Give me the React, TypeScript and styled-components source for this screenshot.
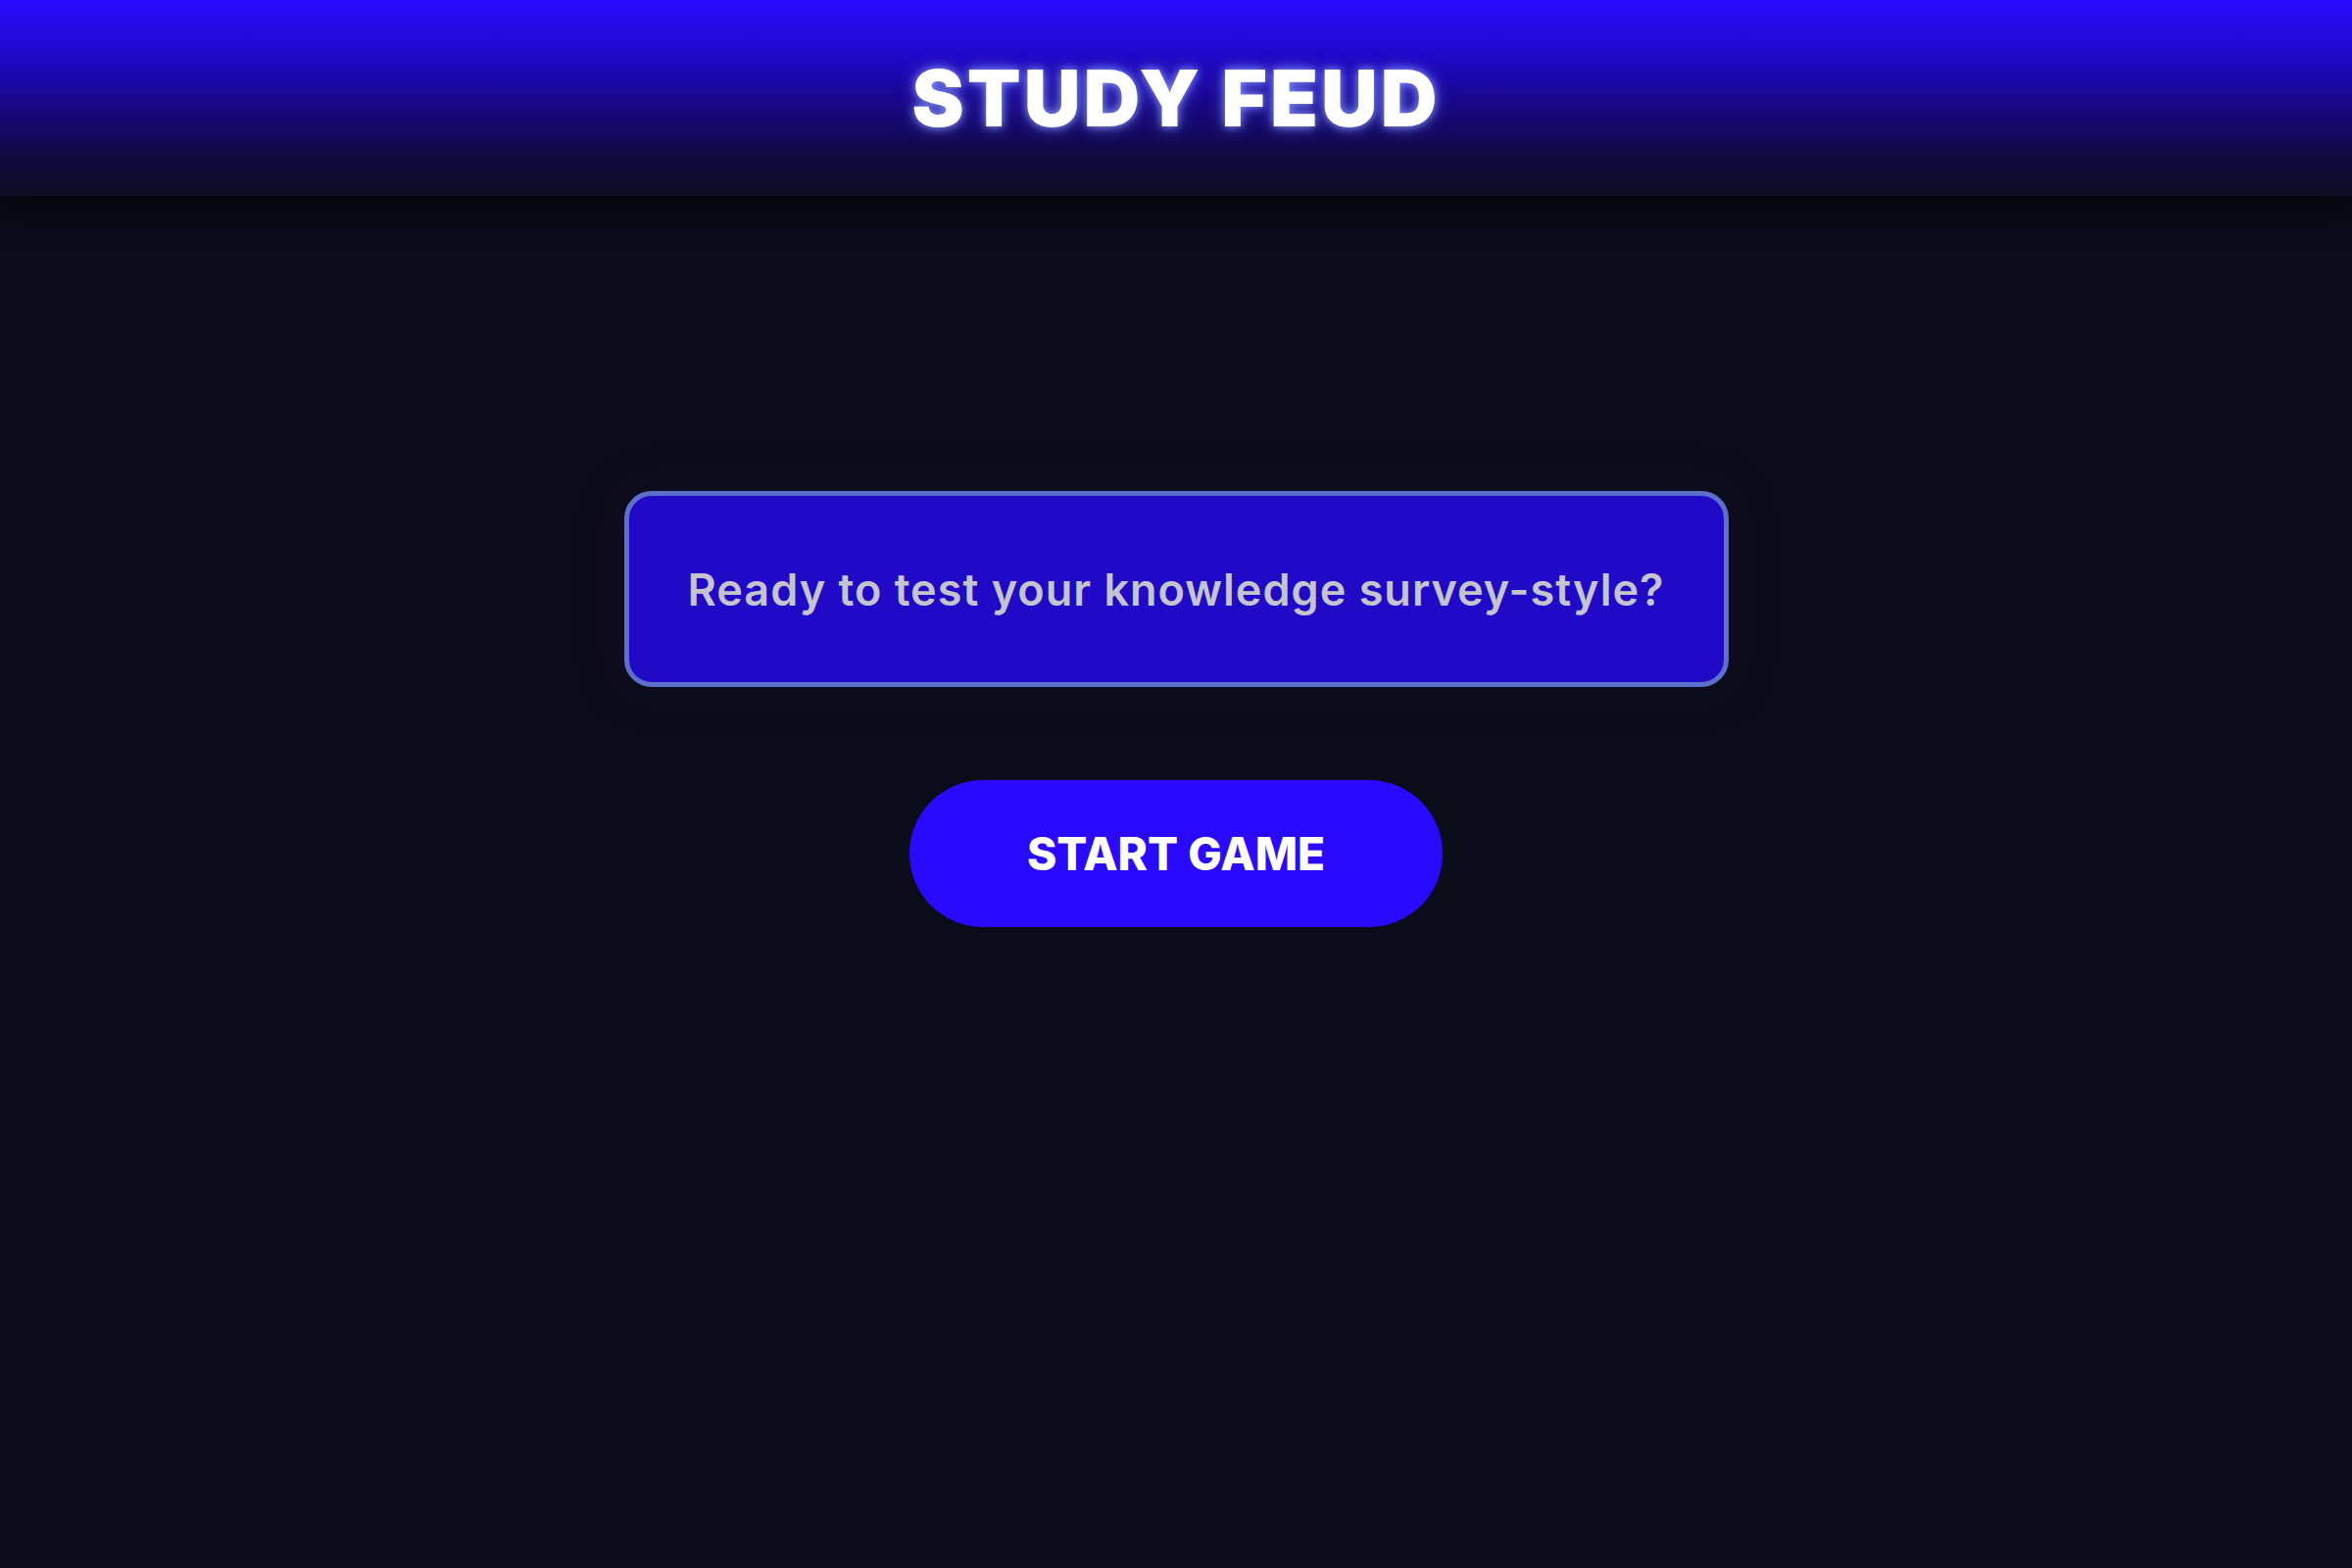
import React from "react";
import styled, { createGlobalStyle } from "styled-components";

const GlobalStyle = createGlobalStyle`
  html, body {
    margin: 0;
    padding: 0;
    background: #0b0b19;
  }
  body {
    font-family: "Inter", "Noto Sans", sans-serif;
    min-height: 1600px;
  }
  * { box-sizing: border-box; }
`;

const Page = styled.div`
  min-height: 1600px;
  display: flex;
  flex-direction: column;
  background: #0b0b19;
`;

const Header = styled.header`
  height: 200px;
  display: flex;
  align-items: flex-start;
  justify-content: center;
  padding-top: 52px;
  background: linear-gradient(180deg, #2a0aff 0%, #1f08c4 30%, #170782 55%, #100a40 80%, #0e0c22 100%);
  box-shadow: 0 6px 30px rgba(3, 3, 8, 0.9);
  position: relative;
  z-index: 1;
`;

const Title = styled.h1`
  margin: 0;
  font-family: "Inter", sans-serif;
  font-weight: 900;
  font-size: 80px;
  line-height: 96px;
  color: #ffffff;
  letter-spacing: 3px;
  text-shadow: 0 0 8px rgba(150, 165, 255, 0.9), 0 0 18px rgba(110, 130, 255, 0.6);
`;

const Main = styled.main`
  flex: 1;
  display: flex;
  flex-direction: column;
  align-items: center;
  padding-top: 301px;
  gap: 95px;
`;

const PromptBox = styled.div`
  width: 1127px;
  height: 200px;
  display: flex;
  align-items: center;
  justify-content: center;
  background: #200ac8;
  border: 5px solid #5a70cc;
  border-radius: 28px;
  box-shadow: 0 0 40px rgba(20, 20, 45, 0.6);
`;

const PromptText = styled.p`
  margin: 0;
  font-family: "Inter", sans-serif;
  font-weight: 600;
  font-size: 45px;
  letter-spacing: 1px;
  color: #c4c4cc;
`;

const StartButton = styled.button`
  width: 544px;
  height: 150px;
  border: none;
  border-radius: 75px;
  background: #2a0aff;
  color: #ffffff;
  font-family: "Inter", sans-serif;
  font-weight: 800;
  font-size: 46px;
  cursor: pointer;
`;

export default function App() {
  return (
    <Page>
      <GlobalStyle />
      <Header>
        <Title>STUDY FEUD</Title>
      </Header>
      <Main>
        <PromptBox>
          <PromptText>Ready to test your knowledge survey-style?</PromptText>
        </PromptBox>
        <StartButton>START GAME</StartButton>
      </Main>
    </Page>
  );
}
